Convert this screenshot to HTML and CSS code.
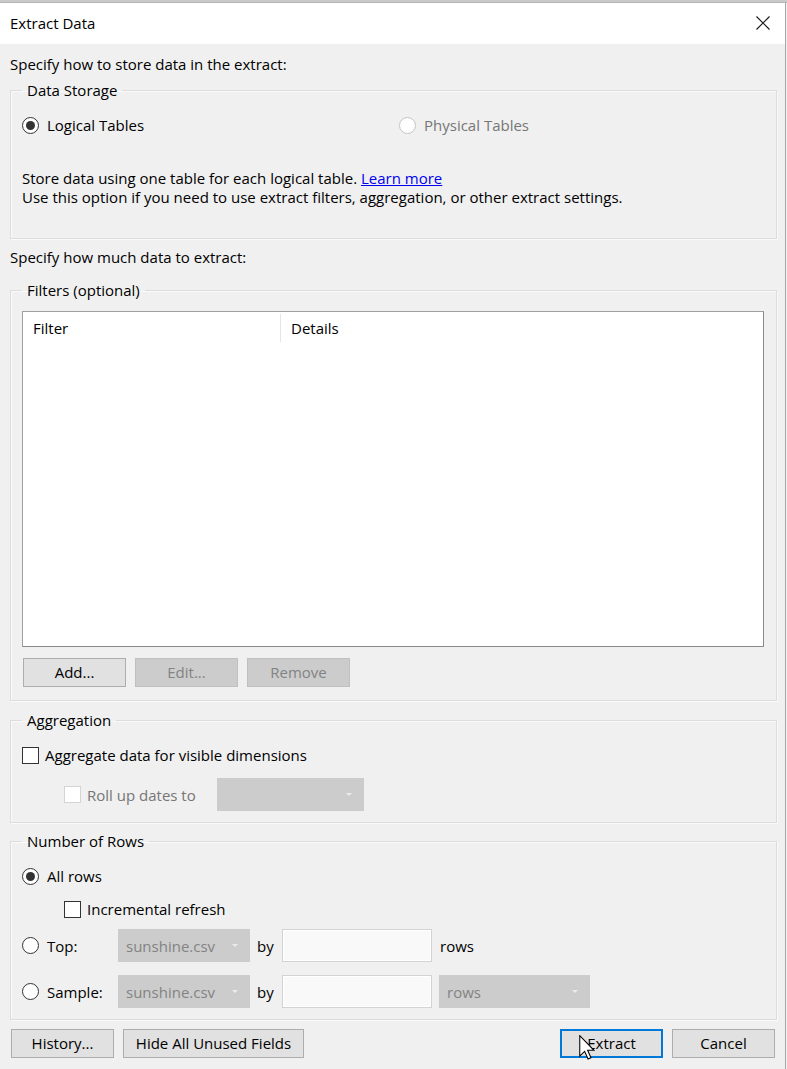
FILE: index.html
```html
<!DOCTYPE html>
<html lang="en">
<head>
<meta charset="utf-8">
<title>Extract Data</title>
<link rel="stylesheet" href="styles.css">
</head>
<body>
<div class="strip"></div>
<div class="window">
  <div class="titlebar">
    <span class="title">Extract Data</span>
    <svg class="close" width="14" height="14" viewBox="0 0 14 14"><path d="M0.5 0.5 L13.5 13.5 M13.5 0.5 L0.5 13.5" stroke="#1a1a1a" stroke-width="1.2" fill="none"/></svg>
  </div>
  <div class="content">
    <p class="section-label">Specify how to store data in the extract:</p>
    <fieldset class="group storage">
      <legend>Data Storage</legend>
      <div class="storage-opts">
        <label class="opt"><span class="radio checked"></span>Logical Tables</label>
        <label class="opt disabled"><span class="radio"></span>Physical Tables</label>
      </div>
      <p class="desc">Store data using one table for each logical table. <a href="#">Learn more</a><br>Use this option if you need to use extract filters, aggregation, or other extract settings.</p>
    </fieldset>

    <p class="section-label second">Specify how much data to extract:</p>
    <fieldset class="group filters">
      <legend>Filters (optional)</legend>
      <div class="listbox">
        <div class="list-head">
          <div class="col col-filter">Filter</div>
          <div class="col col-details">Details</div>
        </div>
      </div>
      <div class="btn-row">
        <button class="btn">Add...</button>
        <button class="btn" disabled>Edit...</button>
        <button class="btn" disabled>Remove</button>
      </div>
    </fieldset>

    <fieldset class="group aggregation">
      <legend>Aggregation</legend>
      <label class="opt check-row"><span class="check"></span>Aggregate data for visible dimensions</label>
      <div class="rollup-row">
        <label class="opt disabled"><span class="check"></span>Roll up dates to</label>
        <div class="dropdown rollup-dd"><span></span><span class="arrow"></span></div>
      </div>
    </fieldset>

    <fieldset class="group numrows">
      <legend>Number of Rows</legend>
      <label class="opt allrows"><span class="radio checked"></span>All rows</label>
      <label class="opt incremental"><span class="check"></span>Incremental refresh</label>
      <div class="rows-grid">
        <label class="opt"><span class="radio"></span>Top:</label>
        <div class="dropdown"><span>sunshine.csv</span><span class="arrow"></span></div>
        <span class="by">by</span>
        <div class="input"></div>
        <span class="rows-text">rows</span>

        <label class="opt"><span class="radio"></span>Sample:</label>
        <div class="dropdown"><span>sunshine.csv</span><span class="arrow"></span></div>
        <span class="by">by</span>
        <div class="input"></div>
        <div class="dropdown rows-dd"><span>rows</span><span class="arrow"></span></div>
      </div>
    </fieldset>

    <div class="footer">
      <div class="footer-left">
        <button class="btn">History...</button>
        <button class="btn wide">Hide All Unused Fields</button>
      </div>
      <div class="footer-right">
        <button class="btn default">Extract</button>
        <button class="btn">Cancel</button>
      </div>
    </div>
  </div>
</div>
<svg class="cursor" width="16" height="25" viewBox="0 0 12 19"><path d="M0.5 0.5 L0.5 16 L4.2 12.4 L6.8 18.3 L9 17.3 L6.5 11.6 L11.3 11.6 Z" fill="#fff" stroke="#000" stroke-width="0.8" stroke-linejoin="miter"/></svg>
</body>
</html>
```
FILE: styles.css
```css
* { box-sizing: border-box; }

body {
  margin: 0;
  width: 787px;
  height: 1069px;
  overflow: hidden;
  position: relative;
  background: #f0f0f0;
  font-family: "Open Sans", "Noto Sans", sans-serif;
  font-size: 15px;
  color: #000;
}

.strip {
  height: 3px;
  background: #c9c9c9;
  border-bottom: 1px solid #b5b5b5;
}

.window {
  width: 786px;
  height: 1066px;
  background: #f0f0f0;
  border-right: 1px solid #a8a8a8;
}

.titlebar {
  height: 41px;
  background: #fff;
  display: flex;
  align-items: center;
  justify-content: space-between;
  padding: 0 15px 1px 10px;
}

.title { font-size: 15px; line-height: 20px; }

.close { display: block; }

.content { padding: 10px 8px 0 10px; }

.section-label {
  margin: 0;
  height: 20px;
  line-height: 20px;
}

.section-label.second { margin-top: 8px; }

.group {
  margin: 6px 0 0;
  padding: 0 12px 0 11px;
  border: 1px solid #dcdcdc;
  box-shadow: inset 1px 1px 0 #fafafa, 1px 1px 0 #fafafa;
  min-width: 0;
}

.group legend {
  padding: 0 5px;
  margin: 0;
  line-height: 20px;
  height: 20px;
}

.opt {
  display: flex;
  align-items: center;
  height: 20px;
  line-height: 20px;
  white-space: nowrap;
}

.opt.disabled { color: #767676; }

.radio {
  width: 17px;
  height: 17px;
  border: 1px solid #333;
  border-radius: 50%;
  background: #fff;
  margin-right: 8px;
  flex: none;
  display: flex;
  align-items: center;
  justify-content: center;
}

.radio.checked::after {
  content: "";
  width: 9px;
  height: 9px;
  border-radius: 50%;
  background: #333;
}

.opt.disabled .radio { border-color: #c4c4c4; }

.check {
  width: 17px;
  height: 17px;
  border: 1px solid #333;
  background: #fff;
  margin-right: 6px;
  flex: none;
}

.opt.disabled .check { border-color: #d4d4d4; }

/* Data storage */
.storage { padding-bottom: 31px; }

.storage-opts {
  margin-top: 15px;
  display: grid;
  grid-template-columns: 377px 1fr;
}

.desc {
  margin: 34px 0 0;
  line-height: 19px;
}

.desc a { color: #0000ee; }

/* Filters */
.filters { margin-top: 13px; padding-bottom: 13px; }

.listbox {
  margin-top: 11px;
  height: 336px;
  background: #fff;
  border: 1px solid #a0a0a0;
  border-right-color: #8a8a8a;
  border-bottom-color: #8a8a8a;
}

.list-head {
  display: flex;
  height: 31px;
  padding-top: 2px;
}

.col {
  height: 28px;
  line-height: 28px;
  padding-left: 10px;
}

.col-filter {
  width: 258px;
  border-right: 1px solid #e5e5e5;
}

.btn-row {
  margin-top: 11px;
  display: flex;
  gap: 9px;
  padding-left: 1px;
}

.btn {
  height: 29px;
  width: 103px;
  border: 1px solid #adadad;
  background: #e1e1e1;
  font: inherit;
  color: #000;
  padding: 0;
  line-height: 27px;
}

.btn:disabled {
  background: #cccccc;
  border-color: #bfbfbf;
  color: #838383;
}

.btn.wide { width: 181px; }

.btn.default {
  border: 2px solid #0078d7;
  line-height: 25px;
}

/* Aggregation */
.aggregation { margin-top: 9px; padding-bottom: 11px; }

.check-row { margin-top: 15px; }

.rollup-row {
  margin-top: 13px;
  display: flex;
  align-items: center;
  height: 33px;
  padding-left: 42px;
}

.rollup-row .opt { width: 153px; }

.dropdown {
  height: 33px;
  background: #cccccc;
  color: #838383;
  display: flex;
  align-items: center;
  justify-content: space-between;
  padding: 0 12px 0 8px;
}

.rollup-dd { width: 147px; }

.arrow {
  width: 0;
  height: 0;
  border-left: 3px solid transparent;
  border-right: 3px solid transparent;
  border-top: 3px solid #ececec;
}

/* Number of rows */
.numrows { margin-top: 8px; padding-bottom: 11px; }

.allrows { margin-top: 15px; }

.incremental {
  margin-top: 13px;
  padding-left: 42px;
}

.rows-grid {
  margin-top: 10px;
  display: grid;
  grid-template-columns: 96px 132px 32px 150px auto;
  grid-auto-rows: 33px;
  row-gap: 13px;
  align-items: center;
}

.by { padding-left: 7px; }

.input {
  height: 33px;
  background: #f9f9f9;
  border: 1px solid #d3d3d3;
  box-shadow: inset 0 0 0 1px #fff;
}

.rows-text { padding-left: 8px; }

.rows-dd {
  width: 151px;
  margin-left: 7px;
}

/* Footer */
.footer {
  margin-top: 9px;
  display: flex;
  justify-content: space-between;
  padding: 0 2px 0 1px;
}

.footer-left, .footer-right {
  display: flex;
  gap: 9px;
}

.cursor {
  position: absolute;
  left: 579px;
  top: 1035px;
}
```
